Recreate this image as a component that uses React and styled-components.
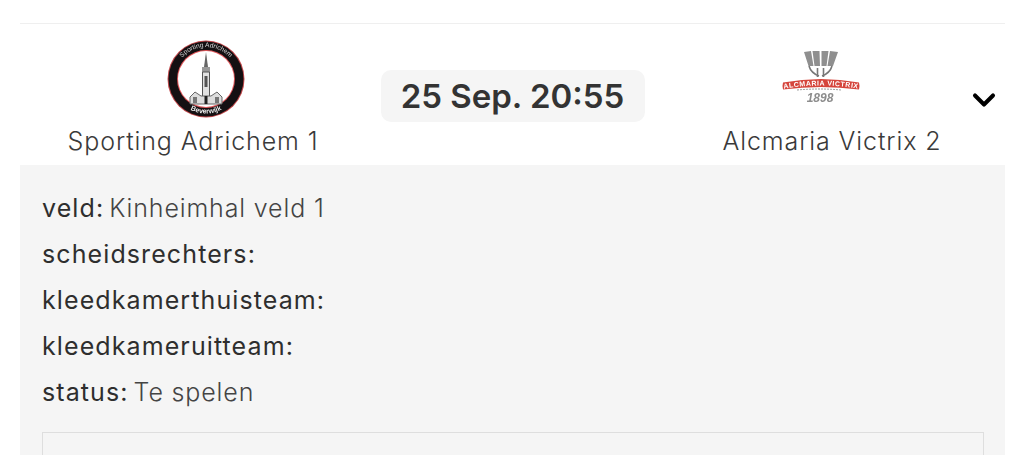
import React from 'react'
import styled, { createGlobalStyle } from 'styled-components'
import { ChevronDown } from 'lucide-react'

const GlobalStyle = createGlobalStyle`
  html, body {
    margin: 0;
    height: 455px;
    overflow: hidden;
    background: #fff;
    font-family: Inter, "Noto Sans", sans-serif;
    color: #333;
  }
`

const details = [
  { label: 'veld:', value: 'Kinheimhal veld 1' },
  { label: 'scheidsrechters:' },
  { label: 'kleedkamerthuisteam:' },
  { label: 'kleedkameruitteam:' },
  { label: 'status:', value: 'Te spelen' },
]

const ClubCrest = () => (
  <svg width="78" height="78" viewBox="0 0 78 78">
    <circle cx="39" cy="39" r="38.5" fill="#c0474a" />
    <circle cx="39" cy="39" r="37.5" fill="#141012" />
    <circle cx="39" cy="39" r="29" fill="#e0565a" />
    <circle cx="39" cy="39" r="28" fill="#fff" />
    <defs>
      <path id="crestTop" d="M7 39a32 32 0 0 1 64 0" />
      <path id="crestBottom" d="M4.5 39a34.5 34.5 0 0 0 69 0" />
    </defs>
    <text fill="#d8d8d8" fontSize="6.6" fontFamily="Liberation Sans">
      <textPath href="#crestTop" startOffset="50%" textAnchor="middle">Sporting Adrichem</textPath>
    </text>
    <text fill="#eee" fontSize="7" fontWeight="700" fontFamily="Liberation Sans">
      <textPath href="#crestBottom" startOffset="50%" textAnchor="middle">Beverwijk</textPath>
    </text>
    <path d="M39 12l2 15h-4z" fill="#666" />
    <path d="M35 27h8v5h-8z" fill="#999" />
    <path d="M35.5 32h7v30h-7z" fill="#e2e2e2" stroke="#555" />
    <path d="M37.5 36h3v11h-3z" fill="#555" />
    <path d="M23 64v-7l5-5 6 4h10l6-4 5 5v7z" fill="#ddd" stroke="#666" />
    <path d="M26 57h4v6h-4zM48 57h4v6h-4z" fill="#777" />
    <path d="M37.5 56h3v8h-3z" fill="#222" />
  </svg>
)

const VictrixCrest = () => (
  <svg width="78" height="58" viewBox="0 0 78 58">
    <defs>
      <path id="bannerLine" d="M3 38.5Q39 32.5 75 38.5" />
    </defs>
    <path d="M22 2l7-1 2.5 15h-5zM30.500 1h7l.5 15h-5.500zM39.500 1h7l-2 15h-5zM48 1l8 1-5 14h-5.500z" fill="#8f8f8f" />
    <g fill="none" stroke="#777" strokeWidth="1.6">
      <path d="M27 16q2 7 10 10" />
      <path d="M50 16q-2 7-10 10" />
      <path d="M35.500 18v9M41.500 18v9" />
    </g>
    <path d="M1 32.500Q39 25.500 77 32.500q1 3.500 0 7Q39 34.500 1 39.500q-1-3.500 0-7z" fill="#d5453c" />
    <text fill="#fff" fontSize="7" fontWeight="700" letterSpacing=".5" fontFamily="Liberation Sans">
      <textPath href="#bannerLine" startOffset="50%" textAnchor="middle">ALCMARIA VICTRIX</textPath>
    </text>
    <path d="M15 40q23-2 44 0" fill="none" stroke="#999" strokeDasharray="2 1" />
    <text x="38" y="52" textAnchor="middle" fill="#8d8d8d" fontSize="12" fontWeight="700" fontStyle="italic" fontFamily="Liberation Sans">1898</text>
  </svg>
)

const App = () => (
  <>
    <GlobalStyle />
    <Card>
      <MatchRow>
        <Team>
          <Logo $home><ClubCrest /></Logo>
          <TeamName>Sporting Adrichem 1</TeamName>
        </Team>
        <DateCell>
          <DatePill>25 Sep. 20:55</DatePill>
        </DateCell>
        <Team>
          <Logo><VictrixCrest /></Logo>
          <TeamName>Alcmaria Victrix 2</TeamName>
        </Team>
        <Toggle><ChevronDown size={36} strokeWidth={2.7} color="#000" /></Toggle>
      </MatchRow>
      <Panel>
        {details.map(item => (
          <DetailRow key={item.label}>
            <Label>{item.label}</Label>
            {item.value && <Value>{item.value}</Value>}
          </DetailRow>
        ))}
        <Comments />
      </Panel>
    </Card>
  </>
)

const Card = styled.div`
  margin: 23px 19px 0 20px;
  border-top: 1px solid #efefef;
`

const MatchRow = styled.div`
  position: relative;
  display: grid;
  grid-template-columns: 346px 1fr 346px;
  height: 141px;
`

const Team = styled.div`
  display: flex;
  flex-direction: column;
  align-items: center;
`

const Logo = styled.div`
  height: 78px;
  margin-top: 16px;
  margin-bottom: 7px;
  display: flex;
  align-items: flex-start;
  justify-content: center;
  padding-top: ${props => (props.$home ? '0' : '10px')};
  box-sizing: border-box;
  filter: blur(0.4px);
  transform: translateX(${props => (props.$home ? '13px' : '-11px')});
`

const TeamName = styled.div`
  font-size: 25px;
  line-height: 32px;
  letter-spacing: 0.9px;
  font-weight: 300;
  color: #3a3a3a;
  white-space: nowrap;
`

const DateCell = styled.div`
  display: flex;
  justify-content: center;
  padding-top: 46px;
`

const DatePill = styled.div`
  width: 264px;
  height: 52px;
  line-height: 52px;
  text-align: center;
  border-radius: 10px;
  background: #f5f5f5;
  font-size: 33px;
  font-weight: 600;
  color: #333;
  white-space: nowrap;
`

const Toggle = styled.div`
  position: absolute;
  top: 58px;
  right: 3px;
  display: flex;
`

const Panel = styled.div`
  box-sizing: border-box;
  height: 290px;
  background: #f5f5f5;
  padding: 20px 21px 0 22px;
`

const DetailRow = styled.div`
  height: 46px;
  line-height: 46px;
  font-size: 25px;
  white-space: pre;
`

const Label = styled.span`
  font-weight: 400;
  letter-spacing: 1.1px;
  color: #2e2e2e;
`

const Value = styled.span`
  margin-left: 5px;
  font-weight: 300;
  letter-spacing: 0.85px;
  color: #444;
`

const Comments = styled.div`
  box-sizing: border-box;
  margin-top: 17px;
  height: 23px;
  border: 1px solid #dedede;
  border-bottom: none;
`

export default App
